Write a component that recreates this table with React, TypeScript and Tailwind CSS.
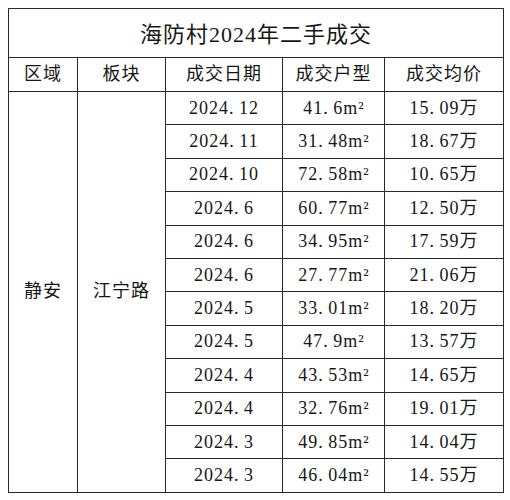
import React from 'react';

const rows = [
  ['2024.12', '41.6', '15.09'],
  ['2024.11', '31.48', '18.67'],
  ['2024.10', '72.58', '10.65'],
  ['2024.6', '60.77', '12.50'],
  ['2024.6', '34.95', '17.59'],
  ['2024.6', '27.77', '21.06'],
  ['2024.5', '33.01', '18.20'],
  ['2024.5', '47.9', '13.57'],
  ['2024.4', '43.53', '14.65'],
  ['2024.4', '32.76', '19.01'],
  ['2024.3', '49.85', '14.04'],
  ['2024.3', '46.04', '14.55'],
];

const cell = 'border border-[#2a2a2a] text-center align-middle p-0';

// period drawn half-width, as in the original font
const Num = ({ v }: { v: string }) => {
  const [a, b] = v.split('.');
  return (
    <>
      {a}
      <span className="inline-block w-[10px] text-left">.</span>
      {b}
    </>
  );
};

export default function App() {
  return (
    <div className="bg-white w-[510px] h-[500px] pt-[8px] pl-[8px]">
      <table
        className="table-fixed border-collapse text-[#161616] w-[495px] text-[18px] tracking-[1px]"
        style={{ fontFamily: '"Liberation Serif", "Noto Sans CJK SC", serif' }}
      >
        <colgroup>
          <col className="w-[69px]" />
          <col className="w-[88px]" />
          <col className="w-[117px]" />
          <col className="w-[102px]" />
          <col className="w-[119px]" />
        </colgroup>
        <tbody>
          <tr className="h-[49px]">
            <td colSpan={5} className={`${cell} text-[22px] pt-[2px]`}>
              海防村2024年二手成交
            </td>
          </tr>
          <tr className="h-[34px]">
            <td className={cell}>区域</td>
            <td className={cell}>板块</td>
            <td className={cell}>成交日期</td>
            <td className={cell}>成交户型</td>
            <td className={cell}>成交均价</td>
          </tr>
          {rows.map(([date, area, price], i) => (
            <tr key={i} className="h-[33.4px]">
              {i === 0 && (
                <>
                  <td rowSpan={12} className={cell}>静安</td>
                  <td rowSpan={12} className={cell}>江宁路</td>
                </>
              )}
              <td className={cell}>
                <Num v={date} />
              </td>
              <td className={cell}>
                <Num v={area} />m<span className="tracking-normal">²</span>
              </td>
              <td className={cell}>
                <Num v={price} />万
              </td>
            </tr>
          ))}
        </tbody>
      </table>
    </div>
  );
}
